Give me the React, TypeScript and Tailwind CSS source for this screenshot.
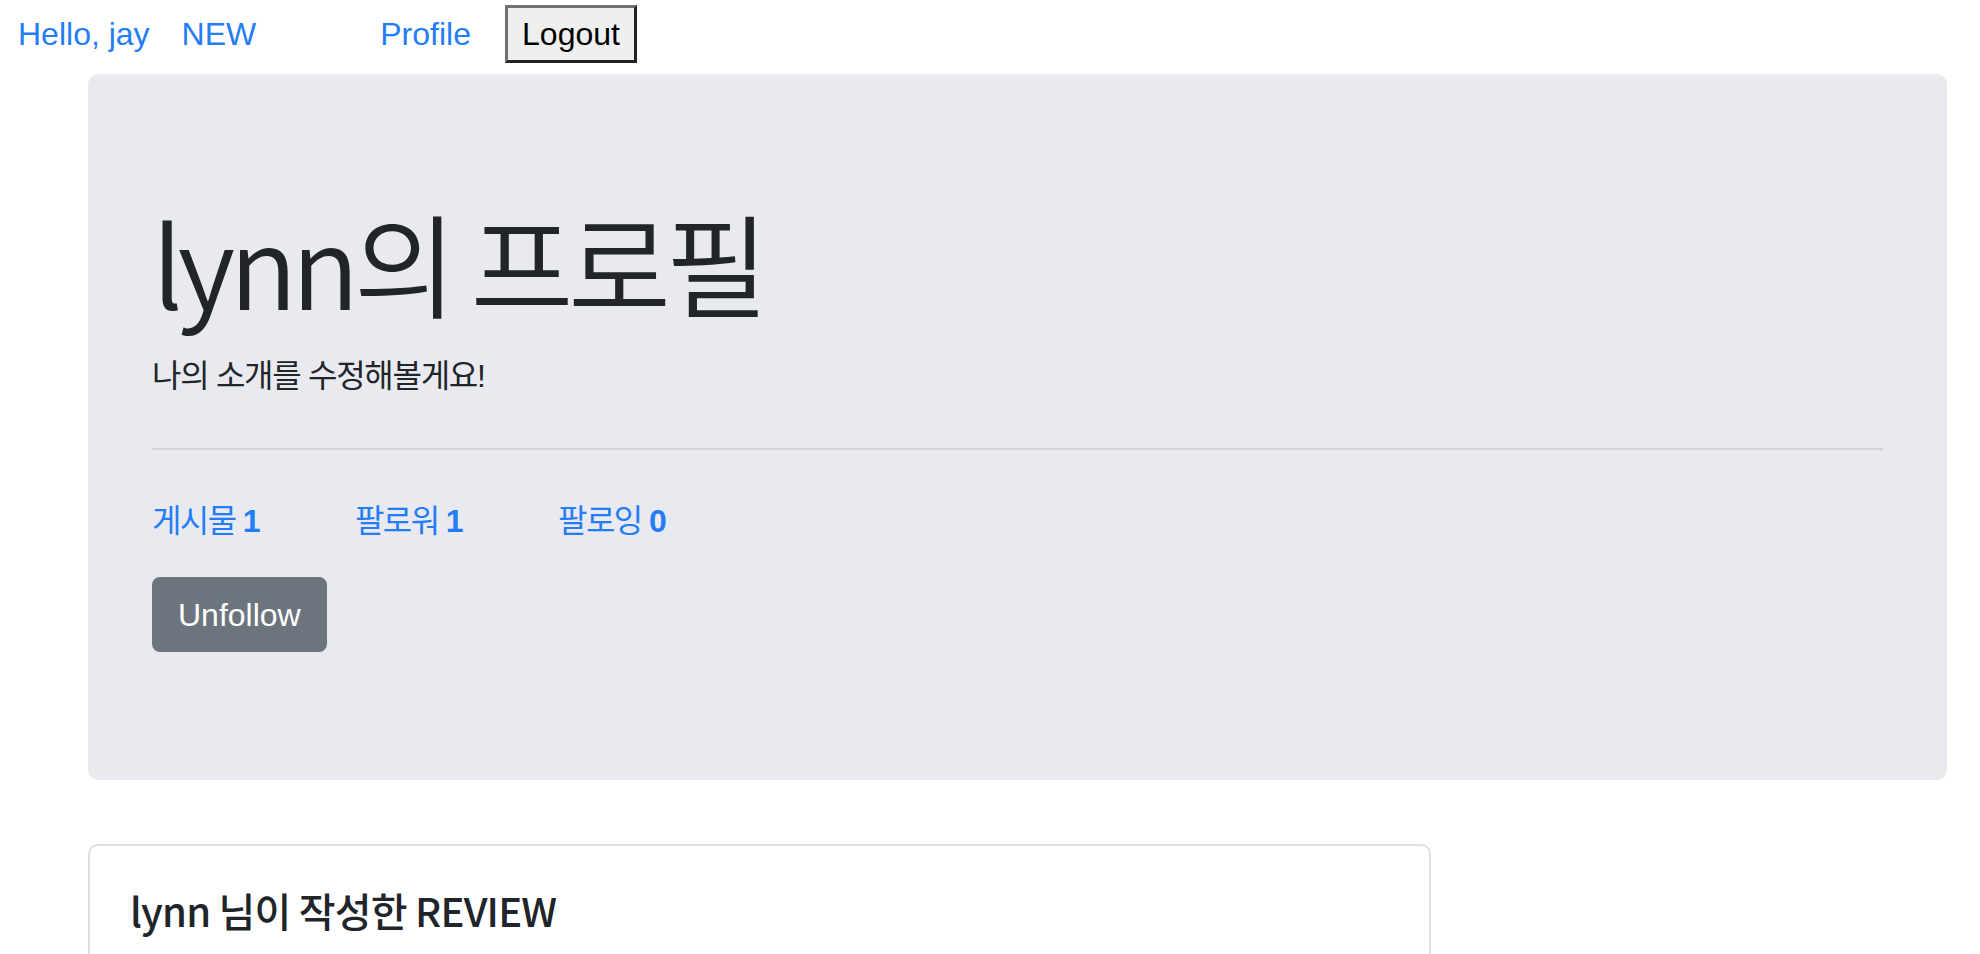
import React from 'react'

const stats = [
  { label: '게시물', count: 1 },
  { label: '팔로워', count: 1 },
  { label: '팔로잉', count: 0 },
]

export default function App() {
  return (
    <div
      className="min-h-screen bg-white text-[#212529]"
      style={{ fontFamily: '"Liberation Sans", "Noto Sans CJK KR", sans-serif' }}
    >
      {/* Nav */}
      <div className="flex items-center h-[58px] mt-[5px] pl-[18px] text-[32px] leading-none">
        <a className="text-[#247df7]">Hello, jay</a>
        <a className="ml-[32px] text-[#247df7]">NEW</a>
        <a className="ml-[124px] text-[#247df7]">Profile</a>
        <button className="ml-[34px] w-[132px] h-[58px] bg-[#efefef] text-black text-[32px] border-[3px] border-t-[#717171] border-l-[#717171] border-r-[#222] border-b-[#222]">
          Logout
        </button>
      </div>

      {/* Jumbotron */}
      <div className="ml-[88px] mr-[33px] mt-[11px] rounded-[10px] bg-[#e9eaef] px-[64px] pt-[120px] pb-[128px]">
        <h1
          className="text-[112px] leading-[1.2] font-[350] mb-[24px] tracking-[-0.05em]"
          style={{ fontFamily: '"Noto Sans CJK KR", sans-serif' }}
        >
          lynn의 프로필
        </h1>
        <p className="text-[32px] leading-[48px] tracking-[-0.04em]">나의 소개를 수정해볼게요!</p>
        <hr className="mt-[48px] mb-[47px] border-0 border-t-2 border-[#d3d4d8]" />
        <div className="flex gap-[96px] text-[32px] leading-[48px] text-[#247df7] tracking-[-0.05em]">
          {stats.map((s) => (
            <a key={s.label}>
              {s.label} <b className="font-bold">{s.count}</b>
            </a>
          ))}
        </div>
        <button className="mt-[32px] h-[75px] px-[24px] rounded-[8px] bg-[#6c757d] border-2 border-[#6c757d] text-white text-[32px]">
          Unfollow
        </button>
      </div>

      {/* Review card */}
      <div className="ml-[88px] mt-[64px] w-[1343px] rounded-[10px] border-2 border-[#dfdfdf] p-[40px]">
        <h5
          className="text-[40px] leading-[1.2] font-medium tracking-[-0.02em]"
          style={{ fontFamily: '"Noto Sans CJK KR", sans-serif' }}
        >
          lynn 님이 작성한 REVIEW
        </h5>
      </div>
    </div>
  )
}
